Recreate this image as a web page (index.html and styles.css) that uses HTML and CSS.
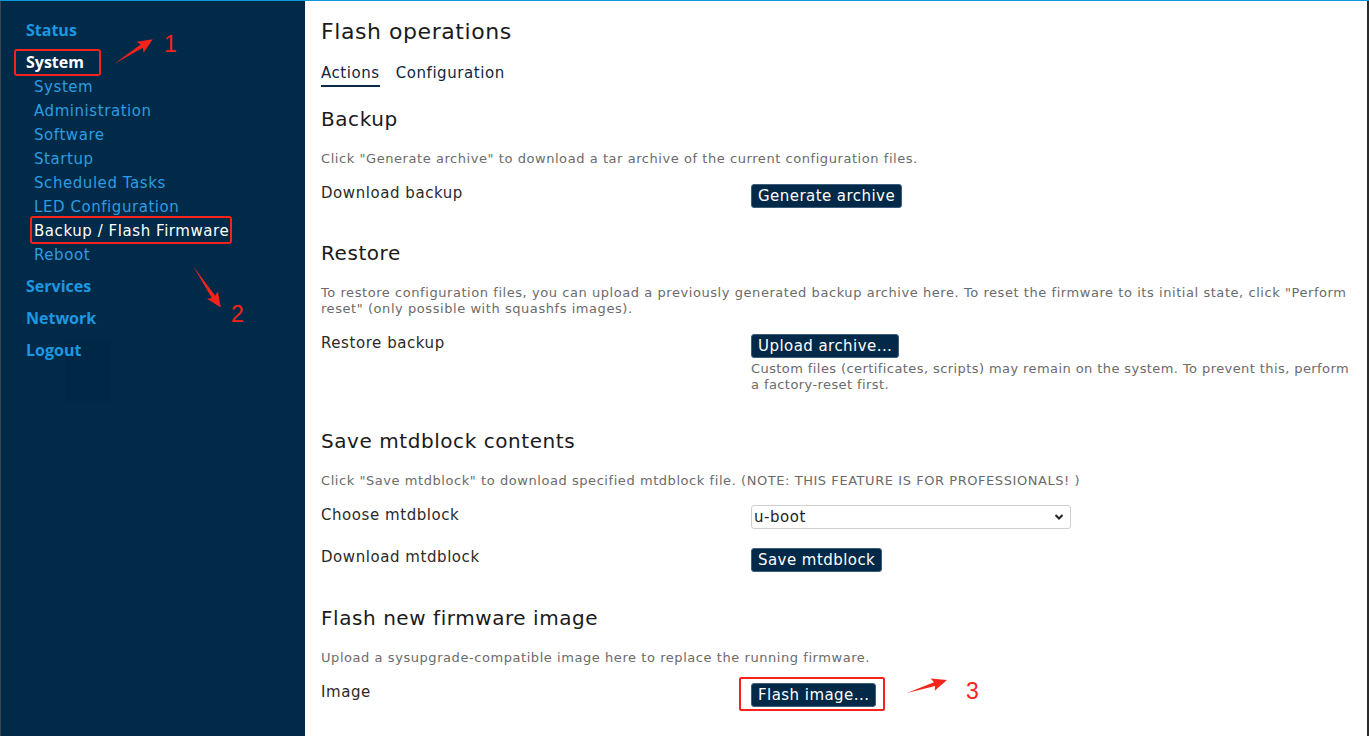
FILE: index.html
```html
<!DOCTYPE html>
<html>
<head>
<meta charset="utf-8">
<title>Flash operations</title>
<link rel="stylesheet" href="styles.css">
</head>
<body>
<div class="page">
  <nav class="sidebar">
    <div class="ghost"></div>
    <ul class="menu">
      <li class="top"><a>Status</a></li>
      <li class="top active"><a>System</a>
        <ul class="sub">
          <li><a>System</a></li>
          <li><a>Administration</a></li>
          <li><a>Software</a></li>
          <li><a>Startup</a></li>
          <li><a>Scheduled Tasks</a></li>
          <li><a>LED Configuration</a></li>
          <li class="cur"><a>Backup / Flash Firmware</a></li>
          <li><a>Reboot</a></li>
        </ul>
      </li>
      <li class="top"><a>Services</a></li>
      <li class="top"><a>Network</a></li>
      <li class="top"><a>Logout</a></li>
    </ul>
  </nav>
  <main class="main">
    <h2 class="title">Flash operations</h2>
    <div class="tabs">
      <span class="tab on">Actions</span>
      <span class="tab">Configuration</span>
    </div>

    <section class="sec first">
      <h3>Backup</h3>
      <p class="desc">Click "Generate archive" to download a tar archive of the current configuration files.</p>
      <div class="row">
        <div class="label">Download backup</div>
        <div class="field"><button class="btn">Generate archive</button></div>
      </div>
    </section>

    <section class="sec">
      <h3>Restore</h3>
      <p class="desc">To restore configuration files, you can upload a previously generated backup archive here. To reset the firmware to its initial state, click "Perform reset" (only possible with squashfs images).</p>
      <div class="row">
        <div class="label">Restore backup</div>
        <div class="field">
          <button class="btn">Upload archive...</button>
          <p class="help">Custom files (certificates, scripts) may remain on the system. To prevent this, perform a factory-reset first.</p>
        </div>
      </div>
    </section>

    <section class="sec">
      <h3>Save mtdblock contents</h3>
      <p class="desc">Click "Save mtdblock" to download specified mtdblock file. (NOTE: THIS FEATURE IS FOR PROFESSIONALS! )</p>
      <div class="row">
        <div class="label">Choose mtdblock</div>
        <div class="field sel">
          <div class="select"><span>u-boot</span>
            <svg class="chev" width="10" height="8" viewBox="0 0 10 8"><path d="M1.5 2 L5 5.5 L8.5 2" fill="none" stroke="#222" stroke-width="2"/></svg>
          </div>
        </div>
      </div>
      <div class="row">
        <div class="label">Download mtdblock</div>
        <div class="field"><button class="btn">Save mtdblock</button></div>
      </div>
    </section>

    <section class="sec last">
      <h3>Flash new firmware image</h3>
      <p class="desc">Upload a sysupgrade-compatible image here to replace the running firmware.</p>
      <div class="row">
        <div class="label">Image</div>
        <div class="field"><button class="btn">Flash image...</button></div>
      </div>
    </section>
  </main>

  <svg class="annot" width="1369" height="736" viewBox="0 0 1369 736">
    <g fill="none" stroke="#f5231b" stroke-width="2">
      <rect x="15" y="50" width="85" height="25" rx="2"/>
      <rect x="31" y="217" width="200" height="26" rx="2"/>
      <rect x="740" y="678" width="144" height="32" rx="1"/>
    </g>
    <g fill="#f5231b">
      <polygon transform="translate(114 64) rotate(-32.7)" points="0,0 33,-2 31,-6.5 46,0 31,6.5 33,2"/>
      <polygon transform="translate(193 266) rotate(56.3)" points="0,0 37,-2 35,-6.5 50,0 35,6.5 37,2"/>
      <polygon transform="translate(907 693) rotate(-18)" points="0,0 29,-2 27,-6.5 42,0 27,6.5 29,2"/>
    </g>
    <g fill="#f5231b" class="num">
      <text x="164" y="52">1</text>
      <text x="231" y="322">2</text>
      <text x="966" y="699">3</text>
    </g>
  </svg>
</div>
</body>
</html>
```

FILE: styles.css
```css
* { box-sizing: border-box; }
html, body { margin: 0; padding: 0; }
body {
  font-family: "DejaVu Sans", "Liberation Sans", sans-serif;
  letter-spacing: 0.035em;
  background: #fff;
  color: #333;
}
.page {
  position: relative;
  display: flex;
  width: 1369px;
  height: 736px;
  border-top: 1px solid #0a9ad8;
  overflow: hidden;
}
.sidebar {
  position: relative;
  width: 305px;
  flex: none;
  background: #012a48;
  border-left: 1px solid #3a4550;
  padding-top: 14px;
}
.menu {
  position: relative;
  z-index: 1;
}
.menu, .sub { list-style: none; margin: 0; padding: 0; }
.top > a {
  display: block;
  padding-left: 25px;
  height: 32px;
  line-height: 30px;
  font-family: "Open Sans", "DejaVu Sans", sans-serif;
  font-size: 16px;
  font-weight: 700;
  letter-spacing: 0;
  color: #1d97e0;
}
.top.active > a { color: #fff; }
.sub { margin-top: -4px; margin-bottom: 4px; }
.sub a {
  display: block;
  padding-left: 33px;
  height: 24px;
  line-height: 24px;
  font-size: 15px;
  color: #2e9ce0;
}
.sub .cur a { color: #fff; }
.ghost {
  position: absolute;
  left: 64px;
  top: 339px;
  width: 46px;
  height: 63px;
  background: #002746;
}
.main {
  flex: 1;
  padding: 0 16px;
  border-right: 2px solid #2b2b2b;
}
.title {
  margin: 16px 0 0;
  font-size: 22px;
  line-height: 30px;
  font-weight: 400;
  color: #1a1a1a;
}
.tabs {
  display: flex;
  gap: 16px;
  margin-top: 16px;
}
.tab {
  font-size: 15px;
  line-height: 20px;
  padding-bottom: 2px;
  border-bottom: 2px solid transparent;
  color: #0f2740;
}
.tab.on { border-bottom-color: #0f2a47; }
.sec { margin-top: 31px; }
.sec.first { margin-top: 18px; }
.sec.last { margin-top: 32px; }
h3 {
  margin: 0;
  font-size: 20px;
  line-height: 28px;
  font-weight: 400;
  color: #1a1a1a;
}
.desc {
  margin: 17px 0 0;
  padding-top: 1px;
  font-size: 13px;
  line-height: 16px;
  color: #6b6b6b;
}
.row {
  display: flex;
  align-items: flex-start;
  margin-top: 15px;
}
.row + .row { margin-top: 17px; }
.label {
  width: 430px;
  flex: none;
  padding-top: 1px;
  font-size: 15px;
  line-height: 20px;
  color: #2a2a2a;
}
.field { flex: 1; padding-top: 2px; }
.field.sel { padding-top: 1px; }
.btn {
  display: inline-block;
  height: 24px;
  padding: 0 6px;
  font-family: inherit;
  font-size: 15px;
  letter-spacing: 0.03em;
  line-height: 22px;
  color: #fff;
  background: #022a48;
  border: 1px solid #3d5d7a;
  border-radius: 3px;
}
.help {
  margin: 3px 0 3px;
  font-size: 13px;
  line-height: 16px;
  letter-spacing: 0.032em;
  color: #6b6b6b;
}
.select {
  display: flex;
  align-items: center;
  justify-content: space-between;
  width: 320px;
  height: 24px;
  padding: 0 6px 0 2px;
  border: 1px solid #cfcfcf;
  border-radius: 3px;
  font-size: 15px;
  color: #222;
}
.annot {
  position: absolute;
  left: 0;
  top: -1px;
  pointer-events: none;
}
.num text {
  font-family: "Liberation Sans", sans-serif;
  font-size: 23px;
  letter-spacing: 0;
}
```
